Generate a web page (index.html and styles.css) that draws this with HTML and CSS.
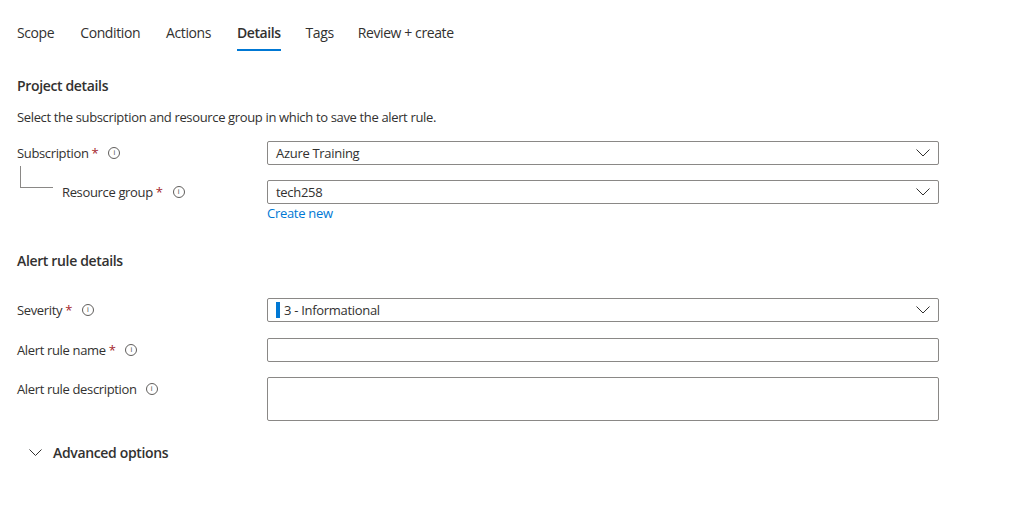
FILE: index.html
```html
<!DOCTYPE html>
<html>
<head>
<meta charset="utf-8">
<link rel="stylesheet" href="styles.css">
</head>
<body>
<div class="page">
  <nav class="tabs">
    <span class="tab">Scope</span>
    <span class="tab">Condition</span>
    <span class="tab">Actions</span>
    <span class="tab active">Details</span>
    <span class="tab">Tags</span>
    <span class="tab">Review + create</span>
  </nav>

  <section class="section project">
    <h2 class="heading">Project details</h2>
    <p class="desc">Select the subscription and resource group in which to save the alert rule.</p>

    <div class="row">
      <div class="label">Subscription <span class="req">*</span> <span class="info">i</span></div>
      <div class="select"><span class="val">Azure Training</span><svg class="chev" width="14" height="8" viewBox="0 0 14 8"><path d="M0.5 0.5 L7 7 L13.5 0.5" fill="none" stroke="#323130" stroke-width="1"/></svg></div>
    </div>

    <div class="row child">
      <div class="label"><span class="tree"></span>Resource group <span class="req">*</span> <span class="info">i</span></div>
      <div class="field">
        <div class="select"><span class="val">tech258</span><svg class="chev" width="14" height="8" viewBox="0 0 14 8"><path d="M0.5 0.5 L7 7 L13.5 0.5" fill="none" stroke="#323130" stroke-width="1"/></svg></div>
        <a class="link">Create new</a>
      </div>
    </div>
  </section>

  <section class="section alert">
    <h2 class="heading">Alert rule details</h2>

    <div class="row sev">
      <div class="label">Severity <span class="req">*</span> <span class="info">i</span></div>
      <div class="select"><span class="bar"></span><span class="val">3 - Informational</span><svg class="chev" width="14" height="8" viewBox="0 0 14 8"><path d="M0.5 0.5 L7 7 L13.5 0.5" fill="none" stroke="#323130" stroke-width="1"/></svg></div>
    </div>

    <div class="row">
      <div class="label">Alert rule name <span class="req">*</span> <span class="info">i</span></div>
      <div class="input"></div>
    </div>

    <div class="row">
      <div class="label">Alert rule description <span class="info gap">i</span></div>
      <div class="textarea"></div>
    </div>
  </section>

  <div class="advanced">
    <svg class="adv-chev" width="13" height="8" viewBox="0 0 13 8"><path d="M0.5 0.5 L6.5 6.5 L12.5 0.5" fill="none" stroke="#323130" stroke-width="1"/></svg>
    <span>Advanced options</span>
  </div>
</div>
</body>
</html>
```

FILE: styles.css
```css
* { box-sizing: border-box; }
html, body { margin: 0; padding: 0; background: #fff; }
body {
  font-family: "Segoe UI", "Open Sans", "Liberation Sans", sans-serif;
  color: #323130;
  font-size: 13px;
}
.page { padding: 0 17px; width: 956px; }

.tabs {
  display: flex;
  padding-top: 22px;
  height: 51px;
}
.tab {
  font-size: 14px;
  line-height: 22px;
  height: 29px;
  margin-right: 26px;
  color: #323130;
  letter-spacing: -0.4px;
}
.tab:nth-child(4) { margin-right: 25px; }
.tab:nth-child(5) { margin-right: 24px; }
.tab.active {
  font-weight: 600;
  letter-spacing: -0.45px;
  border-bottom: 2px solid #0078d4;
}

.heading {
  font-size: 14px;
  font-weight: 600;
  margin: 0;
  line-height: 20px;
  letter-spacing: -0.35px;
}
.project { padding-top: 25px; }
.project .heading { margin-bottom: 12px; }
.desc {
  margin: 0 0 15px 0;
  line-height: 18px;
  letter-spacing: -0.35px;
}

.row {
  display: grid;
  grid-template-columns: 250px 672px;
  align-items: start;
  margin-bottom: 15px;
}
.label {
  display: flex;
  align-items: center;
  height: 24px;
  letter-spacing: -0.35px;
  position: relative;
}
.req { color: #a4262c; margin-left: 3px; }
.info {
  display: inline-flex;
  align-items: center;
  justify-content: center;
  width: 12px;
  height: 12px;
  border: 1px solid #605e5c;
  border-radius: 50%;
  font-size: 8px;
  line-height: 1;
  color: #605e5c;
  margin-left: 10px;
  letter-spacing: 0;
  font-family: "Liberation Sans", sans-serif;
}
.info.gap { margin-left: 9px; }

.child .label { padding-left: 45px; }
.tree {
  position: absolute;
  left: 3px;
  top: -14px;
  width: 33px;
  height: 22px;
  border-left: 1px solid #8a8886;
  border-bottom: 1px solid #8a8886;
}

.select, .input {
  height: 24px;
  border: 1px solid #8a8886;
  border-radius: 2px;
  display: flex;
  align-items: center;
  padding: 0 8px;
}
.val { flex: 1; letter-spacing: -0.3px; }
.field { display: flex; flex-direction: column; }
.link {
  color: #0078d4;
  line-height: 18px;
  letter-spacing: -0.3px;
}
.child { margin-bottom: 0; }

.alert { padding-top: 29px; }
.alert .heading { margin-bottom: 27px; }
.sev { margin-bottom: 16px; }
.bar {
  width: 4px;
  height: 16px;
  background: #0078d4;
  margin-right: 4px;
}
.textarea {
  height: 44px;
  border: 1px solid #8a8886;
  border-radius: 2px;
}

.advanced {
  display: flex;
  align-items: center;
  padding-left: 12px;
  margin-top: 22px;
  font-size: 14px;
  font-weight: 600;
  letter-spacing: -0.35px;
}
.adv-chev { margin-right: 11px; }
```
